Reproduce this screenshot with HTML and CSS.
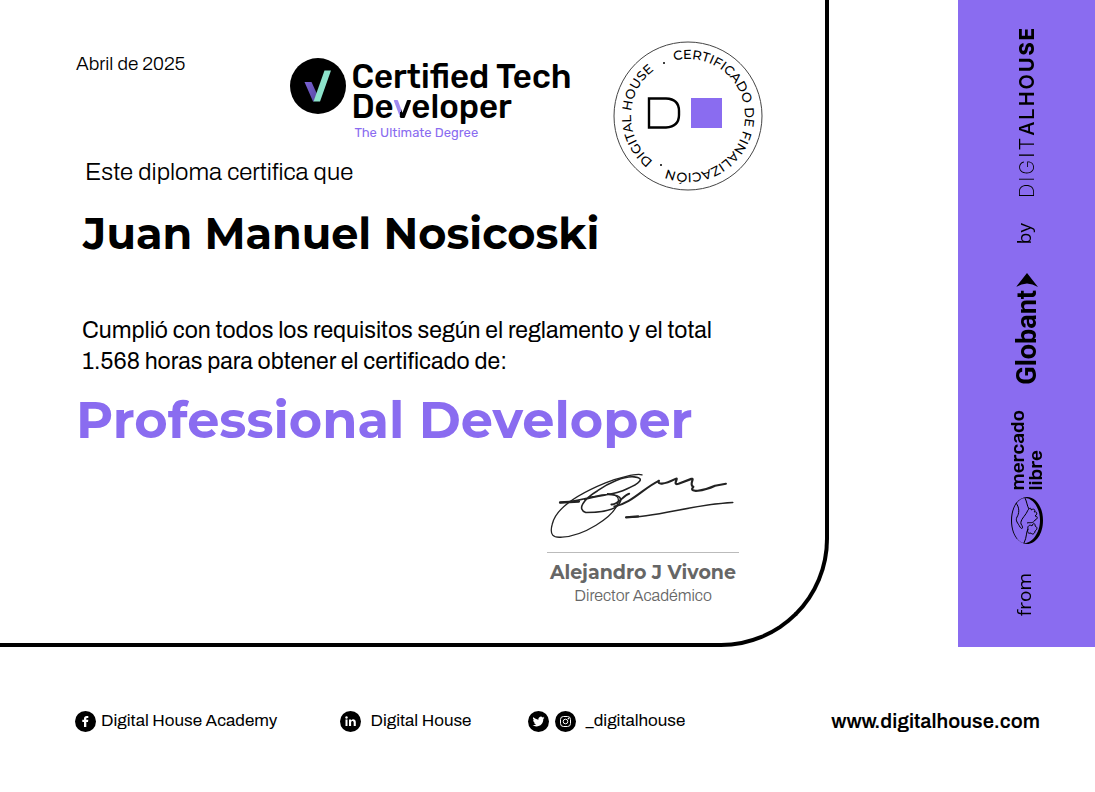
FILE: index.html
```html
<!DOCTYPE html>
<html lang="es">
<head>
<meta charset="utf-8">
<meta name="viewport" content="width=device-width, initial-scale=1">
<title>Certificado - Professional Developer</title>
<link rel="stylesheet" href="styles.css">
</head>
<body>
<div class="page">
  <main class="certificate">
    <header class="top">
      <div class="intro">
        <div class="brand-row">
          <p class="date">Abril de 2025</p>
          <div class="brand">
            <svg class="brand-mark" viewBox="0 0 56 56" aria-hidden="true">
              <defs>
                <linearGradient id="arm" x1="0" y1="0" x2="1" y2="1">
                  <stop offset="0" stop-color="#7c63d6"/>
                  <stop offset="1" stop-color="#5546a0"/>
                </linearGradient>
              </defs>
              <circle cx="28" cy="28" r="28"/>
              <path d="M14.500 24H21.500L27 36L24 43.500H23Z" fill="url(#arm)"/>
              <path d="M34.500 12.500H41L30 43.500H23.500Z" fill="#8ce3cb"/>
            </svg>
            <div class="brand-text">
              <p class="brand-name">Certified Tech<br>De<span class="brand-v">v</span>eloper</p>
              <p class="brand-tag">The Ultimate Degree</p>
            </div>
          </div>
        </div>
        <p class="lead">Este diploma certifica que</p>
      </div>
      <svg class="seal" viewBox="0 0 150 150" role="img" aria-label="Certificado de finalización, Digital House">
        <defs>
          <path id="ring" d="M75 132A57 57 0 0 1 75 18A57 57 0 0 1 75 132A57 57 0 0 1 75 18"/>
        </defs>
        <circle class="seal-edge" cx="75" cy="75" r="74"/>
        <text class="seal-text" text-anchor="middle"><textPath href="#ring" startOffset="272">CERTIFICADO DE FINALIZACIÓN</textPath></text>
        <text class="seal-text" text-anchor="middle"><textPath href="#ring" startOffset="90">DIGITAL HOUSE</textPath></text>
        <circle cx="51" cy="22" r="1"/>
        <circle cx="48" cy="124" r="1"/>
        <path class="seal-d" d="M36 57.500H53Q66 58 66 70V74Q66 85.500 53 86.500H36Z"/>
        <rect class="seal-square" x="78" y="57" width="31" height="30"/>
      </svg>
    </header>

    <h1 class="student">Juan Manuel Nosicoski</h1>
    <p class="statement">Cumplió con todos los requisitos según el reglamento y el total<br>1.568 horas para obtener el certificado de:</p>
    <h2 class="degree">Professional Developer</h2>

    <section class="signature">
      <svg class="signature-ink" viewBox="0 0 192 76" aria-hidden="true">
        <path d="M12 34C25 34 36 30 47 28C62 24 76 26 73 33C70 43 49 44 38 44C29 41 35 31 50 22C61 14 77 7 87 8C99 9 92 15 80 20C66 27 52 26 37 31" stroke-width="1.600"/>
        <path d="M95 6C90 4 70 9 58 14C36 23 8 38 4 56C1 67 5 70 14 69C36 68 65 49 70 36C73 29 70 26 60 25" stroke-width="1.300"/>
        <path d="M64 36C70 37 77 26 82 25M67 38C84 35 97 19 112 12" stroke-width="2"/>
        <path d="M112 12C110 16 117 16 129 10C133 8 125 17 132 15L145 10C149 9 142 16 147 18C141 25 158 22 169 17L180 15" stroke-width="2.200"/>
        <path d="M79 49C110 49 145 36 187 34" stroke-width="1.500"/>
        <path d="M12 34L31 33M79 49L91 48" stroke-width="2.500"/>
      </svg>
      <p class="signer">Alejandro J Vivone</p>
      <p class="role">Director Académico</p>
    </section>
  </main>

  <aside class="partners">
    <span class="side-text">from</span>
    <div class="mercado">
      <svg class="mercado-mark" viewBox="0 0 34 47" aria-hidden="true">
        <path class="solid" fill-rule="evenodd" d="M17 0C26 0 33 10 33 23.500S26 47 17 47S1 37 1 23.500S8 0 17 0ZM15 1C8 1 2 11 2 23.500S8 46 15 46S30 36 30 23.500S23 1 15 1Z"/>
        <path d="M6 6C10 11 9 17 7 20C5 24 8 26 10 30C12 33 14 31 11 27C10 23 15 19 17 15C19 10 22 11 21 13C24 11 26 13 24 15C27 14 28 17 25 19C28 19 28 22 25 23C23 27 20 25 17 26"/>
        <path d="M15 1C17 5 17 9 19 12M14 46C17 40 16 35 18 32C17 29 20 27 22 29C22 26 26 26 25 29C28 30 27 33 25 34C25 37 22 38 21 36C18 37 17 35 18 32"/>
      </svg>
      <span class="mercado-text">mercado<br>libre</span>
    </div>
    <div class="globant">
      <span class="globant-text">Globant</span>
      <svg class="globant-mark" viewBox="0 0 22 15" aria-hidden="true"><path d="M11 0L22 14Q11 7 0 14Z"/></svg>
    </div>
    <span class="side-text side-by">by</span>
    <span class="dh"><span class="w2">DIG</span><span class="w3">IT</span><span class="w5">AL</span><span class="w6">HO</span><span class="w7">U</span><span class="w8">SE</span></span>
  </aside>
</div>

<footer class="footer">
  <div class="social social-first">
    <svg class="social-icon" viewBox="0 0 21 21" aria-hidden="true"><circle cx="10.500" cy="10.500" r="10.500"/><path fill="#fff" d="M9 16V11H7.300V8.800H9V7.600C9 5.700 10 4.900 11.700 4.900H13.300V6.900H12.200C11.500 6.900 11.300 7.200 11.300 7.800V8.800H13.300L13 11H11.300V16Z"/></svg>
    <span>Digital House Academy</span>
  </div>
  <div class="social social-wide">
    <svg class="social-icon" viewBox="0 0 21 21" aria-hidden="true"><circle cx="10.500" cy="10.500" r="10.500"/><path fill="#fff" d="M5.500 8.500H7.500V15H5.500ZM9 8.500H11V9.400C12.400 7.600 15.800 8 15.800 11V15H13.700V11.700C13.700 9.500 11.100 9.500 11.100 11.700V15H9Z"/><circle cx="6.500" cy="6.500" r="1.200" fill="#fff"/></svg>
    <span>Digital House</span>
  </div>
  <div class="social social-wide">
    <div class="icon-pair">
      <svg class="social-icon" viewBox="0 0 21 21" aria-hidden="true"><circle cx="10.500" cy="10.500" r="10.500"/><path fill="#fff" transform="translate(4.500 4.500) scale(.5)" d="M23.950 4.570a10 10 0 0 1-2.820.77 4.960 4.960 0 0 0 2.160-2.720c-.95.550-2 .950-3.130 1.180a4.920 4.920 0 0 0-8.380 4.480C7.690 8.090 4.070 6.130 1.640 3.160a4.920 4.920 0 0 0 1.520 6.570 4.900 4.900 0 0 1-2.230-.61v.06a4.920 4.920 0 0 0 3.950 4.830 5 5 0 0 1-2.210.08 4.940 4.940 0 0 0 4.600 3.420A9.870 9.870 0 0 1 0 19.540a14 14 0 0 0 7.550 2.210c9.050 0 14-7.500 14-13.980 0-.21 0-.42-.02-.63a9.940 9.940 0 0 0 2.420-2.570z"/></svg>
      <svg class="social-icon" viewBox="0 0 21 21" aria-hidden="true"><circle cx="10.500" cy="10.500" r="10.500"/><g fill="none" stroke="#fff"><rect x="5.500" y="5.500" width="10" height="10" rx="3"/><circle cx="10.500" cy="10.500" r="2.300"/></g><circle cx="13.400" cy="7.600" r=".8" fill="#fff"/></svg>
    </div>
    <span>_digitalhouse</span>
  </div>
  <a class="site" href="https://www.digitalhouse.com">www.digitalhouse.com</a>
</footer>
</body>
</html>
```
FILE: styles.css
```css
* { box-sizing: border-box; }

body {
  margin: 0;
  background: #fff;
  color: #000;
  font-family: Archivo, "Liberation Sans", Arial, sans-serif;
}

p, h1, h2 { margin: 0; }

.page {
  display: grid;
  grid-template-columns: minmax(0, 1fr) 137px;
  column-gap: 129px;
}

.certificate {
  padding: 41px 62px 36px 76px;
  border-right: 4px solid #000;
  border-bottom: 4px solid #000;
  border-bottom-right-radius: 108px;
}

.top {
  display: flex;
  justify-content: space-between;
  align-items: flex-start;
}

.brand-row {
  display: flex;
  gap: 105px;
  height: 115px;
  padding-top: 12px;
}

.date {
  font-size: 19px;
  font-weight: 300;
  line-height: 22px;
}

.brand {
  display: flex;
  gap: 5px;
  padding-top: 5px;
}

.brand-mark {
  width: 56px;
  height: 56px;
}

.brand-name {
  padding-top: 4px;
  font: 500 33px/30px Rubik, Roboto, sans-serif;
  white-space: nowrap;
}

.brand-v {
  background: linear-gradient(105deg, #9f8af0 50%, #000 50%);
  background-clip: text;
  -webkit-background-clip: text;
  color: transparent;
}

.brand-tag {
  padding: 3px 0 0 3px;
  font: 13px/16px Rubik, Roboto, sans-serif;
  color: #8a6cf0;
}

.lead {
  padding-left: 9px;
  font-size: 24px;
  font-weight: 300;
  line-height: 32px;
}

.seal {
  flex: none;
  width: 150px;
  height: 150px;
}

.seal-edge {
  fill: none;
  stroke: #444;
  stroke-width: 1;
}

.seal-text {
  font: 500 13px Montserrat, Inter, sans-serif;
}

.seal-d {
  fill: none;
  stroke: #000;
  stroke-width: 2.4;
}

.seal-square { fill: #8a6cf0; }

.student {
  padding: 15px 0 0 7px;
  font: 700 43px/56px Montserrat, Inter, sans-serif;
}

.statement {
  padding: 53px 0 0 6px;
  font-size: 23px;
  line-height: 31px;
}

.degree {
  padding-top: 11px;
  font: 700 51px/64px Montserrat, Inter, sans-serif;
  color: #8a6cf0;
}

.signature {
  width: 192px;
  margin: 17px 24px 0 auto;
  color: #666;
  text-align: center;
}

.signature-ink {
  display: block;
  width: 192px;
  height: 84px;
  padding-bottom: 8px;
  border-bottom: 1px solid #bbb;
  fill: none;
  stroke: #222;
  stroke-linecap: round;
  stroke-linejoin: round;
}

.signer {
  padding-top: 8px;
  font: 700 19px/24px Montserrat, Inter, sans-serif;
  white-space: nowrap;
}

.role {
  font-size: 16px;
  font-weight: 300;
  line-height: 22px;
}

.partners {
  display: flex;
  flex-direction: column-reverse;
  justify-content: space-between;
  align-items: center;
  padding: 26px 0 31px;
  background: #8a6cf0;
}

.side-text, .mercado-text, .globant-text, .dh {
  writing-mode: vertical-rl;
  transform: rotate(180deg);
  white-space: nowrap;
}

.side-text {
  padding-left: 6px;
  font: 19px/24px "Open Sans", sans-serif;
}

.side-by { margin-bottom: 4px; }

.mercado, .globant {
  display: flex;
  flex-direction: column-reverse;
  align-items: center;
}

.mercado {
  gap: 6px;
  margin-bottom: 4px;
}

.mercado-mark {
  width: 34px;
  height: 47px;
  fill: none;
  stroke: #000;
  stroke-width: 1;
}

.mercado-mark .solid {
  fill: #000;
  stroke: none;
}

.mercado-text {
  font: 500 19px/18px Rubik, Roboto, sans-serif;
}

.globant { gap: 2px; }

.globant-mark {
  width: 22px;
  height: 15px;
}

.globant-text {
  font: 700 27px/28px Roboto, sans-serif;
}

.dh {
  font: 20px/24px Inter, sans-serif;
  letter-spacing: 2px;
}

.w2 { font-weight: 200; }
.w3 { font-weight: 300; }
.w5 { font-weight: 500; }
.w6 { font-weight: 600; }
.w7 { font-weight: 700; }
.w8 { font-weight: 800; }

.footer {
  display: flex;
  align-items: center;
  gap: 57px;
  padding: 62px 55px 59px 75px;
  font-size: 17px;
  line-height: 24px;
}

.social {
  display: flex;
  align-items: center;
  gap: 5px;
  white-space: nowrap;
}

.social-first { padding-right: 6px; }

.social-wide { gap: 9px; }

.icon-pair {
  display: flex;
  gap: 6px;
}

.social-icon {
  width: 21px;
  height: 21px;
}

.site {
  margin-left: auto;
  font-size: 20px;
  font-weight: 600;
  color: inherit;
  text-decoration: none;
}
```
